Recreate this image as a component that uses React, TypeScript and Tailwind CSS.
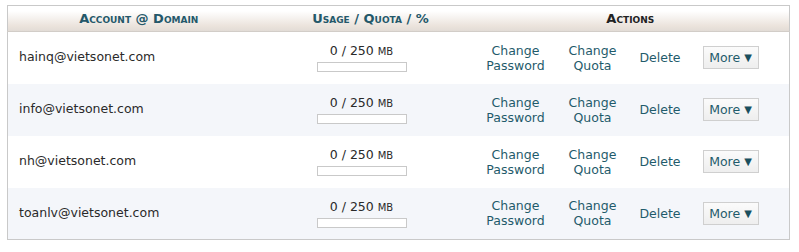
const accounts = ['hainq@vietsonet.com', 'info@vietsonet.com', 'nh@vietsonet.com', 'toanlv@vietsonet.com'];

function Usage() {
  return (
    <div className="flex flex-col items-center pr-[18px]">
      <div className="leading-[15px]">
        0 / 250 <span className="text-[10px]">MB</span>
      </div>
      <div className="mt-[3px] h-[10px] w-[90px] border border-[#c9c9c9] bg-white" />
    </div>
  );
}

function Actions() {
  return (
    <div className="flex items-center text-[#1f5b6b] leading-[15px]">
      <div className="w-[88px] text-center">
        Change
        <br />
        Password
      </div>
      <div className="w-[66px] text-center">
        Change
        <br />
        Quota
      </div>
      <div className="w-[69px] text-center">Delete</div>
      <div className="ml-[8px] flex h-[23px] w-[56px] items-center justify-center gap-[4px] border border-[#cfcfcf] bg-gradient-to-b from-[#fbfbfb] to-[#eeeeee] text-[#1f5b6b]">
        More
        <span className="text-[10px] text-[#1a4f5e]">▼</span>
      </div>
    </div>
  );
}

export default function App() {
  return (
    <div className="h-[252px] w-[799px] bg-white pl-[7px] pt-[5px] font-['DejaVu_Sans',Verdana,sans-serif] text-[12.5px] text-[#2a2a2a]">
      <table className="w-[782px] table-fixed border-collapse border border-[#c9c9c9]">
        <colgroup>
          <col className="w-[262px]" />
          <col className="w-[202px]" />
          <col className="w-[318px]" />
        </colgroup>
        <thead>
          <tr className="h-[26px] border-b border-[#d2cdc8] bg-[linear-gradient(to_bottom,#ffffff_20%,#ebe3dc_80%,#e2dcd6_100%)] text-[13px] font-bold [font-variant:small-caps]">
            <th className="p-0 text-center text-[#24586a]">Account @ Domain</th>
            <th className="p-0 text-center text-[#24586a]">Usage / Quota / %</th>
            <th className="p-0 text-center text-[#222]">Actions</th>
          </tr>
        </thead>
        <tbody>
          {accounts.map((email, i) => (
            <tr key={email} className={`h-[52px] ${i % 2 ? 'bg-[#f4f6fa]' : 'bg-white'}`}>
              <td className="p-0 pl-[11px]">{email}</td>
              <td className="p-0">
                <Usage />
              </td>
              <td className="p-0">
                <Actions />
              </td>
            </tr>
          ))}
        </tbody>
      </table>
    </div>
  );
}
